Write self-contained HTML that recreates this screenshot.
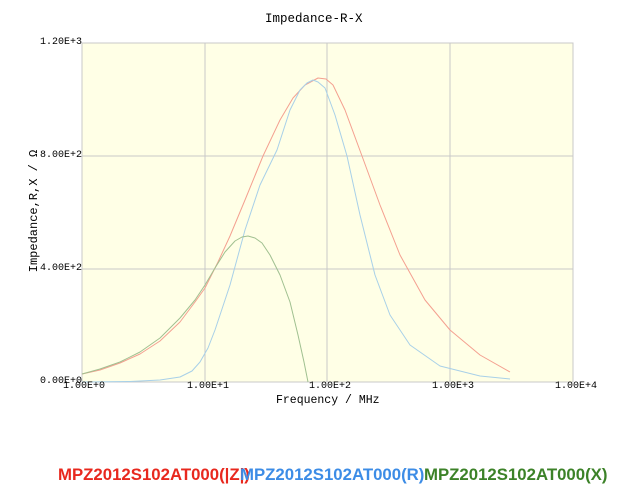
<!DOCTYPE html>
<html><head><style>
body{margin:0;width:619px;height:493px;background:#fff;position:relative;overflow:hidden;font-family:"Liberation Mono","IPAGothic",monospace;}
.t{position:absolute;font-size:10px;color:#000;white-space:nowrap;line-height:12px;}
.lg{position:absolute;top:465px;font:bold 16.8px "Liberation Sans",sans-serif;white-space:nowrap;}
</style></head><body>
<svg width="619" height="493" style="position:absolute;left:0;top:0">
<rect x="82" y="43" width="491" height="339" fill="#ffffe6" stroke="#c8c8c8"/>
<g stroke="#c8c8c8" stroke-width="1">
<line x1="205" y1="43" x2="205" y2="382"/><line x1="327" y1="43" x2="327" y2="382"/><line x1="450" y1="43" x2="450" y2="382"/>
<line x1="82" y1="156" x2="573" y2="156"/><line x1="82" y1="269" x2="573" y2="269"/>
</g>
<g fill="none" stroke-width="1" stroke-linejoin="round">
<polyline stroke="#f4a090" points="82,374 100,370 120,363 140,354 160,341 180,322 195,302 205,288 218,262 230,236 245,200 263,156 280,120 293,98 305,85 318,78 326,79 333,85 345,110 362,156 380,205 400,255 425,300 450,330 480,355 510,372"/>
<polyline stroke="#a8d0e8" points="82,382 130,381.5 160,380 180,377 192,371 200,362 208,348 215,330 230,285 245,230 260,185 277,150 290,110 300,90 307,83 313,80 318,82 325,88 335,115 347,156 360,215 375,275 390,315 410,345 440,366 480,376 510,379"/>
<polyline stroke="#a0c090" points="82,374 100,369 120,362 140,352 160,338 180,318 195,300 205,285 215,268 225,252 235,241 242,237 248,236 255,238 262,243 270,255 280,275 290,302 298,335 304,362 308,382"/>
</g>
</svg>
<div class="t" style="left:265px;top:12px;font-size:12.5px;line-height:14px">Impedance-R-X</div>
<div class="t" style="left:40px;top:37px">1.20E+3</div>
<div class="t" style="left:40px;top:150px">8.00E+2</div>
<div class="t" style="left:40px;top:263px">4.00E+2</div>
<div class="t" style="left:40px;top:376px">0.00E+0</div>
<div class="t" style="left:63px;top:381px">1.00E+0</div>
<div class="t" style="left:187px;top:381px">1.00E+1</div>
<div class="t" style="left:309px;top:381px">1.00E+2</div>
<div class="t" style="left:432px;top:381px">1.00E+3</div>
<div class="t" style="left:555px;top:381px">1.00E+4</div>
<div class="t" style="left:276px;top:394px;font-size:11.5px;line-height:14px">Frequency / MHz</div>
<div class="t" style="left:-31px;top:204px;font-size:12px;line-height:14px;transform:rotate(-90deg);transform-origin:center;width:130px;text-align:center">Impedance,R,X / Ω</div>
<div class="lg" style="left:58px;color:#e8281e">MPZ2012S102AT000(|Z|)</div>
<div class="lg" style="left:240px;color:#3c8ce6">MPZ2012S102AT000(R)</div>
<div class="lg" style="left:424px;color:#3c8228">MPZ2012S102AT000(X)</div>
</body></html>
